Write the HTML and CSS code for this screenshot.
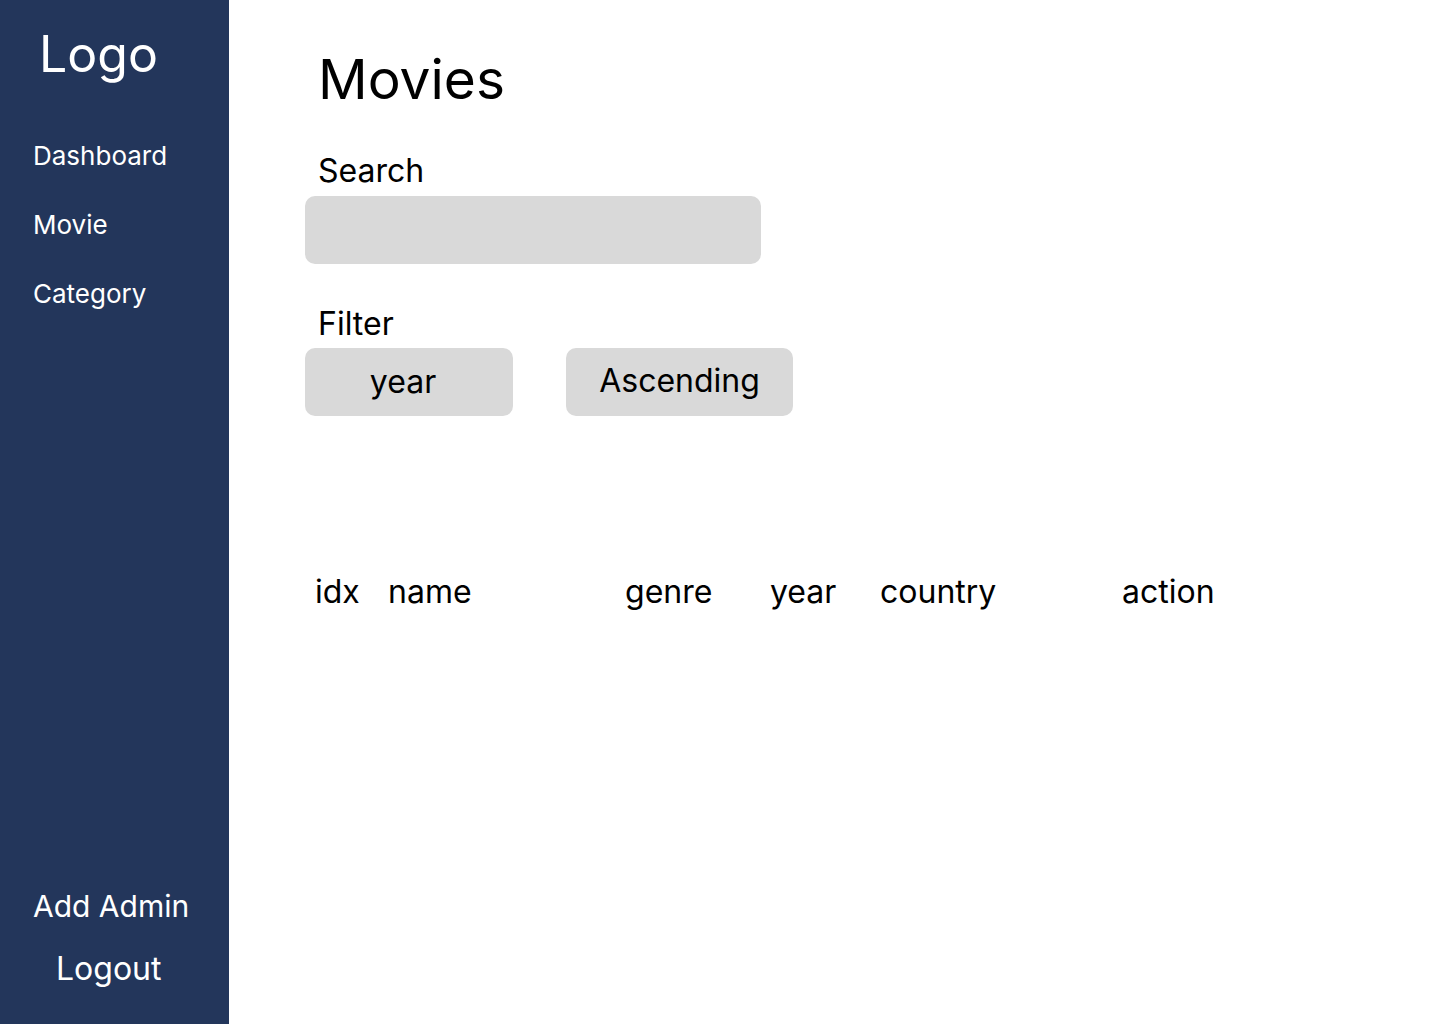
FILE: index.html
```html
<!DOCTYPE html>
<html lang="en">
<head>
<meta charset="utf-8">
<title>Movies</title>
<link rel="stylesheet" href="styles.css">
</head>
<body>
<div class="app">
  <aside class="sidebar">
    <div class="logo">Logo</div>
    <nav class="nav">
      <a class="nav-item">Dashboard</a>
      <a class="nav-item">Movie</a>
      <a class="nav-item">Category</a>
    </nav>
    <div class="bottom">
      <a class="add-admin">Add Admin</a>
      <a class="logout">Logout</a>
    </div>
  </aside>
  <main class="main">
    <h1 class="title">Movies</h1>
    <div class="label search-label">Search</div>
    <div class="search-box"></div>
    <div class="label filter-label">Filter</div>
    <div class="filters">
      <div class="pill pill-year">year</div>
      <div class="pill pill-order">Ascending</div>
    </div>
    <div class="table-head">
      <span class="col col-idx">idx</span>
      <span class="col col-name">name</span>
      <span class="col col-genre">genre</span>
      <span class="col col-year">year</span>
      <span class="col col-country">country</span>
      <span class="col col-action">action</span>
    </div>
  </main>
</div>
</body>
</html>
```

FILE: styles.css
```css
* { box-sizing: border-box; }
html, body { margin: 0; padding: 0; }
body {
  font-family: Inter, "Noto Sans", "Liberation Sans", sans-serif;
  color: #000;
  background: #fff;
}
.app {
  display: flex;
  height: 1024px;
}
.sidebar {
  width: 229px;
  flex: none;
  background: #23365b;
  color: #fff;
  display: flex;
  flex-direction: column;
}
.logo {
  font-size: 50px;
  line-height: 58px;
  margin-top: 25px;
  padding-left: 39px;
}
.nav {
  display: flex;
  flex-direction: column;
  margin-top: 53px;
  padding-left: 33px;
}
.nav-item {
  font-size: 26px;
  line-height: 40px;
  height: 69px;
  padding-top: 0;
}
.bottom {
  margin-top: auto;
  display: flex;
  flex-direction: column;
  padding-bottom: 35px;
}
.add-admin {
  font-size: 30px;
  line-height: 40px;
  padding-left: 33px;
}
.logout {
  font-size: 32px;
  line-height: 40px;
  padding-left: 56px;
  margin-top: 23px;
}
.main {
  flex: 1;
  padding-left: 76px;
}
.title {
  font-weight: 400;
  font-size: 55px;
  line-height: 70px;
  margin: 44px 0 0 13px;
}
.label {
  font-size: 32px;
  line-height: 40px;
  margin-left: 13px;
}
.search-label { margin-top: 37px; }
.search-box {
  width: 456px;
  height: 68px;
  background: #d9d9d9;
  border-radius: 10px;
  margin-top: 5px;
}
.filter-label { margin-top: 40px; }
.filters {
  display: flex;
  gap: 53px;
  margin-top: 4px;
}
.pill {
  height: 68px;
  background: #d9d9d9;
  border-radius: 10px;
  font-size: 32px;
  line-height: 68px;
  text-align: center;
}
.pill-year { width: 208px; padding-right: 12px; }
.pill-order { width: 227px; line-height: 66px; }
.table-head {
  display: flex;
  margin-top: 156px;
  font-size: 32px;
  line-height: 40px;
  padding-left: 10px;
}
.col { flex: none; }
.col-idx { width: 73px; }
.col-name { width: 237px; }
.col-genre { width: 145px; }
.col-year { width: 110px; }
.col-country { width: 242px; }
```
